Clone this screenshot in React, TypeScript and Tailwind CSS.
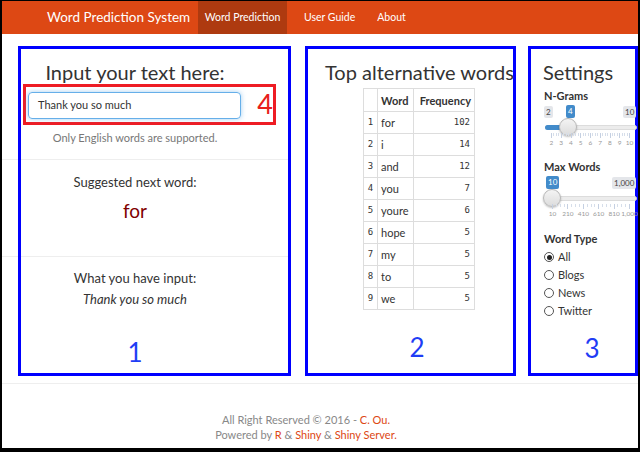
const rows: [string, string, string][] = [
  ["1", "for", "102"],
  ["2", "i", "14"],
  ["3", "and", "12"],
  ["4", "you", "7"],
  ["5", "youre", "6"],
  ["6", "hope", "5"],
  ["7", "my", "5"],
  ["8", "to", "5"],
  ["9", "we", "5"],
];

function Ticks({ xs, labels }: { xs: number[]; labels: string[] }) {
  const minors: number[] = [];
  for (let i = 0; i < xs.length - 1; i++) {
    const step = (xs[i + 1] - xs[i]) / 4;
    for (let k = 1; k < 4; k++) minors.push(xs[i] + step * k);
  }
  return (
    <>
      {xs.map((x, i) => (
        <div key={"M" + i} className="absolute top-[30px] w-px h-[5px] bg-[#c5d0e2]" style={{ left: x }} />
      ))}
      {minors.map((x, i) => (
        <div key={"m" + i} className="absolute top-[30px] w-px h-[3px] bg-[#d6deea]" style={{ left: x }} />
      ))}
      {labels.map((l, i) => (
        <div
          key={"l" + i}
          className="absolute top-[35px] h-[10px] leading-[10px] text-[6.5px] text-[#999] -translate-x-1/2 whitespace-nowrap"
          style={{ left: xs[i] + 0.5 }}
        >
          {l}
        </div>
      ))}
    </>
  );
}

export default function App() {
  const ngX = Array.from({ length: 9 }, (_, i) => 7 + i * 9.75);
  const mwX = Array.from({ length: 6 }, (_, i) => 8 + i * 15.4);
  return (
    <div className="w-[640px] h-[452px] bg-black pt-px pl-[2px] pr-[2px] pb-[4px]">
      <div className="w-[636px] h-[447px] bg-white flex flex-col overflow-hidden font-['Lato',sans-serif] text-[#333]">
        {/* navbar */}
        <nav className="h-[33px] bg-[#dd4814] flex items-stretch text-white shrink-0">
          <div className="pl-[45px] w-[196px] flex items-center text-[13.5px] whitespace-nowrap">Word Prediction System</div>
          <div className="w-[89px] bg-[#ae3a10] flex items-center justify-center text-[10.5px] whitespace-nowrap">
            Word Prediction
          </div>
          <div className="ml-[17px] flex items-center text-[10.5px]">User Guide</div>
          <div className="ml-[22px] flex items-center text-[10.5px]">About</div>
        </nav>

        {/* content */}
        <div className="mt-[12px] flex pl-[16px] shrink-0">
          {/* box 1 */}
          <div className="w-[273px] h-[330px] border-[3px] border-[#0000ff] shrink-0 flex flex-col">
            <div className="ml-[7px] w-[214px] mt-[11px] h-[24px] leading-[24px] text-[20px] text-center whitespace-nowrap">
              Input your text here:
            </div>
            <div className="ml-[2px] w-[253px] h-[41px] border-[3px] border-[#ee1c24] flex items-start">
              <div className="ml-[2px] mt-[5px] w-[214px] h-[27px] rounded-[4px] border border-[#66afe9] shadow-[0_0_5px_rgba(102,175,233,0.6)] flex items-center pl-[9px] text-[11px] text-[#333]">
                Thank you so much
              </div>
              <div className="ml-[16px] mt-[1px] text-[27px] leading-[32px] text-[#e8201c]">4</div>
            </div>
            <div className="ml-[7px] w-[214px] mt-[5px] h-[15px] leading-[15px] text-[11px] text-[#777] text-center">
              Only English words are supported.
            </div>
            <div className="-ml-[19px] mt-[14px] flex">
              <div className="w-[16px] h-px bg-[#eeeeee]" />
              <div className="ml-[3px] w-[267px] h-px bg-[#eeeeee]" />
            </div>
            <div className="ml-[7px] w-[214px] mt-[13px] h-[18px] leading-[18px] text-[13px] text-center">
              Suggested next word:
            </div>
            <div className="ml-[7px] w-[214px] mt-[8px] h-[24px] leading-[24px] text-[19px] text-center text-[#800000]">
              for
            </div>
            <div className="-ml-[19px] mt-[33px] flex">
              <div className="w-[16px] h-px bg-[#eeeeee]" />
              <div className="ml-[3px] w-[267px] h-px bg-[#eeeeee]" />
            </div>
            <div className="ml-[7px] w-[214px] mt-[12px] h-[18px] leading-[18px] text-[13px] text-center">
              What you have input:
            </div>
            <div className="ml-[7px] w-[214px] mt-[3px] h-[18px] leading-[18px] text-[13px] text-center italic">
              Thank you so much
            </div>
            <div className="ml-[7px] w-[214px] mt-[29px] h-[30px] leading-[30px] text-[26px] text-center text-[#1f3df5]">
              1
            </div>
          </div>

          {/* box 2 */}
          <div className="ml-[14px] w-[211px] h-[330px] border-[3px] border-[#0000ff] shrink-0 flex flex-col pl-[17px]">
            <div className="mt-[11px] h-[24px] leading-[24px] text-[20px] text-center whitespace-nowrap">
              Top alternative words
            </div>
            <div className="mt-[4px] flex justify-center">
              <table className="border-collapse text-[11px] leading-none">
                <thead>
                  <tr className="h-[23px]">
                    <th className="w-[14px] border border-[#dddddd]"></th>
                    <th className="w-[36px] border border-[#dddddd] text-left pl-[3px] font-bold">Word</th>
                    <th className="w-[61px] border border-[#dddddd] text-right pr-[3px] font-bold">Frequency</th>
                  </tr>
                </thead>
                <tbody>
                  {rows.map((r) => (
                    <tr key={r[0]} className="h-[22px]">
                      <td className="border border-[#dddddd] text-center font-['DejaVu_Sans_Mono',monospace] text-[9px]">
                        {r[0]}
                      </td>
                      <td className="border border-[#dddddd] pl-[3px]">{r[1]}</td>
                      <td className="border border-[#dddddd] text-right pr-[4px] font-['DejaVu_Sans_Mono',monospace] text-[9px]">
                        {r[2]}
                      </td>
                    </tr>
                  ))}
                </tbody>
              </table>
            </div>
            <div className="mt-[22px] h-[30px] leading-[30px] text-[26px] text-center text-[#1f3df5] -ml-[4px]">2</div>
          </div>

          {/* box 3 */}
          <div className="ml-[12px] w-[110px] h-[330px] border-[3px] border-[#0000ff] shrink-0 flex flex-col pl-[12px]">
            <div className="mt-[11px] h-[24px] leading-[24px] text-[20px] whitespace-nowrap">Settings</div>
            <div className="mt-[5px] ml-[1px] h-[14px] leading-[14px] text-[11px] font-bold">N-Grams</div>
            {/* slider 1 */}
            <div className="relative ml-[1px] w-[93px] h-[46px] shrink-0">
              <div className="absolute left-0 top-[3px] h-[12px] leading-[12px] px-[2px] rounded-[2px] bg-[#e4e6ea] text-[8px] text-[#444]">2</div>
              <div className="absolute left-[79px] top-[3px] h-[12px] leading-[12px] px-[2px] rounded-[2px] bg-[#e4e6ea] text-[8px] text-[#444]">10</div>
              <div className="absolute left-[1px] right-0 top-[22px] h-[5px] rounded-full bg-[#ececec] border border-[#dcdcdc]" />
              <div className="absolute left-[1px] w-[23px] top-[22px] h-[5px] rounded-l-full bg-[#428bca]" />
              <div className="absolute left-[22px] top-[2px] h-[13px] leading-[13px] px-[2px] rounded-[2px] bg-[#428bca] text-[8px] text-white">4</div>
              <div className="absolute left-[15px] top-[15px] w-[18px] h-[18px] rounded-full bg-gradient-to-b from-[#f4f4f4] to-[#dcdcdc] border border-[#b8b8b8] shadow-[0_1px_2px_rgba(0,0,0,0.25)]" />
              <Ticks xs={ngX} labels={["2", "3", "4", "5", "6", "7", "8", "9", "10"]} />
            </div>
            <div className="mt-[11px] ml-[1px] h-[14px] leading-[14px] text-[11px] font-bold">Max Words</div>
            {/* slider 2 */}
            <div className="relative ml-[1px] w-[93px] h-[46px] shrink-0">
              <div className="absolute left-[68px] top-[3px] h-[12px] leading-[12px] px-[2px] rounded-[2px] bg-[#e4e6ea] text-[8px] text-[#444]">1,000</div>
              <div className="absolute left-[1px] right-0 top-[22px] h-[5px] rounded-full bg-[#ececec] border border-[#dcdcdc]" />
              <div className="absolute left-[2px] top-[2px] h-[13px] leading-[13px] px-[2px] rounded-[2px] bg-[#428bca] text-[8px] text-white">10</div>
              <div className="absolute -left-[1px] top-[15px] w-[18px] h-[18px] rounded-full bg-gradient-to-b from-[#f4f4f4] to-[#dcdcdc] border border-[#b8b8b8] shadow-[0_1px_2px_rgba(0,0,0,0.25)]" />
              <Ticks xs={mwX} labels={["10", "210", "410", "610", "810", "1,000"]} />
            </div>
            <div className="mt-[12px] ml-[1px] h-[14px] leading-[14px] text-[11px] font-bold">Word Type</div>
            <div className="mt-[2px] flex flex-col">
              {["All", "Blogs", "News", "Twitter"].map((t, i) => (
                <div key={t} className="h-[18px] flex items-center">
                  <div className="ml-[1px] w-[10px] h-[10px] rounded-full border border-[#555] flex items-center justify-center bg-white">
                    {i === 0 && <div className="w-[5px] h-[5px] rounded-full bg-[#222]" />}
                  </div>
                  <div className="ml-[4px] text-[11px] leading-[14px]">{t}</div>
                </div>
              ))}
            </div>
            <div className="mt-[13px] w-[98px] h-[30px] leading-[30px] text-[26px] text-center text-[#1f3df5]">3</div>
          </div>
        </div>

        <div className="mt-[7px] h-px bg-[#eeeeee] shrink-0" />

        {/* footer */}
        <div className="mt-[28px] pr-[28px] flex flex-col items-center text-[11px] leading-[15px] text-[#888]">
          <div>
            All Right Reserved © 2016 - <span className="text-[#dd4814]">C. Ou.</span>
          </div>
          <div>
            Powered by <span className="text-[#dd4814]">R</span> &amp; <span className="text-[#dd4814]">Shiny</span> &amp;{" "}
            <span className="text-[#dd4814]">Shiny Server.</span>
          </div>
        </div>
      </div>
    </div>
  );
}
